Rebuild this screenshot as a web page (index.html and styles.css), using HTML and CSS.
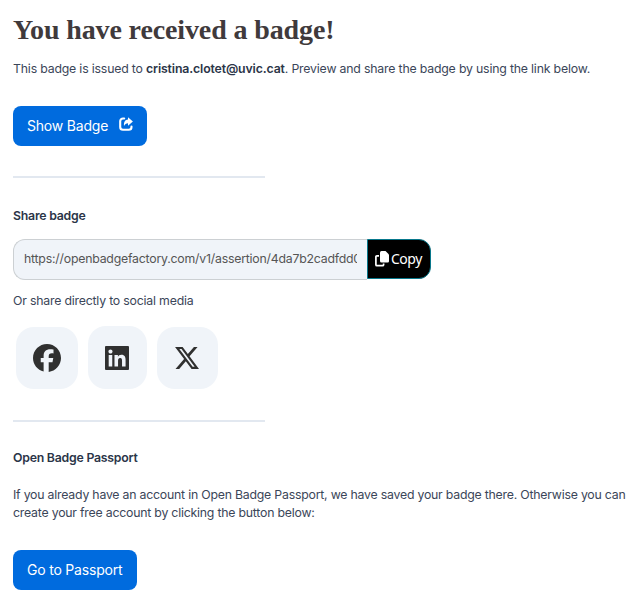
FILE: index.html
```html
<!DOCTYPE html>
<html lang="en">
<head>
<meta charset="utf-8">
<title>You have received a badge!</title>
<link rel="stylesheet" href="styles.css">
</head>
<body>
<main class="page">
  <h1 class="title"><span>You have received a badge!</span></h1>
  <p class="intro">This badge is issued to <strong>cristina.clotet@uvic.cat</strong>. Preview and share the badge by using the link below.</p>
  <a class="button button-show">Show Badge
    <svg class="share-icon" viewBox="0 0 14 14"><path d="M5.200 1.500H4A2.800 2.800 0 0 0 1.200 4.300V10A2.800 2.800 0 0 0 4 12.800H9.700A2.800 2.800 0 0 0 12.500 10V9.500" fill="none" stroke="currentColor" stroke-width="2.100" stroke-linecap="round"/><path d="M9 .3 13.900 4.500 9 8.700V6.200C7 6.200 6 7 5 9 4.600 5 6.200 2.700 9 2.600Z" fill="currentColor"/></svg>
  </a>
  <hr class="rule">
  <h2 class="subtitle">Share badge</h2>
  <div class="link-row">
    <div class="link-field"><span class="link-text">https://openbadgefactory.com/v1/assertion/4da7b2cadfdd0</span></div>
    <button class="copy" type="button"><svg class="copy-icon" viewBox="0 0 14 16"><path d="M6.500 0H10.500L14 3.500V10.200Q14 11.500 12.700 11.500H6.500Q5 11.500 5 10V1.500Q5 0 6.500 0Z" fill="currentColor"/><path d="M4 4.800H1.900Q.9 4.800.9 5.800V13.700Q.9 14.700 1.900 14.700H7.600Q8.600 14.700 8.600 13.700V12.500" fill="none" stroke="currentColor" stroke-width="1.700"/></svg>Copy</button>
  </div>
  <p class="social-label">Or share directly to social media</p>
  <div class="social">
    <a class="tile tile-facebook"><svg class="facebook-icon" viewBox="0 0 512 512"><path fill="currentColor" d="M512 256C512 114.600 397.400 0 256 0S0 114.600 0 256c0 120 82.700 220.800 194.200 248.500V334.200h-52.800V256h52.800v-33.700c0-87.100 39.400-127.500 125-127.500 16.200 0 44.200 3.200 55.700 6.400V172c-6-.6-16.500-1-29.600-1-42 0-58.200 15.900-58.200 57.200V256h83.600l-14.400 78.200h-69.300v175.900C413.800 494.800 512 386.900 512 256Z"/></svg></a>
    <a class="tile tile-linkedin"><svg class="linkedin-icon" viewBox="0 32 448 448"><path fill="currentColor" d="M430 32H18Q0 32 0 50V462Q0 480 18 480H430Q448 480 448 462V50Q448 32 430 32ZM135.400 416H69V202.200h66.500V416Zm-33.200-243c-21.300 0-38.500-17.300-38.500-38.500S80.900 96 102.200 96c21.200 0 38.500 17.300 38.500 38.500 0 21.300-17.200 38.500-38.500 38.500Zm282.100 243h-66.400V312c0-24.800-.5-56.700-34.500-56.700-34.600 0-39.900 27-39.900 54.900V416h-66.400V202.200h63.700v29.200h.9c8.900-16.800 30.600-34.500 62.900-34.500 67.200 0 79.700 44.300 79.700 101.900V416Z"/></svg></a>
    <a class="tile tile-x"><svg class="x-icon" viewBox="26 48 461 416" preserveAspectRatio="none"><path fill="currentColor" d="M389.200 48h70.600L305.600 224.200 487 464H345L233.700 318.600 106.500 464H35.800l164.900-188.500L26.800 48h145.600l100.500 132.900L389.200 48Zm-24.800 373.800h39.100L151.100 88h-42l255.300 333.800Z"/></svg></a>
  </div>
  <hr class="rule">
  <h2 class="subtitle subtitle-passport">Open Badge Passport</h2>
  <p class="passport-text">If you already have an account in Open Badge Passport, we have saved your badge there. Otherwise you can<br>create your free account by clicking the button below:</p>
  <a class="button button-passport">Go to Passport</a>
</main>
</body>
</html>
```
FILE: styles.css
```css
* { box-sizing: border-box; }
body {
  margin: 0;
  background: #fff;
  color: #3b4659;
  font: 12.3px/18px Inter, "Liberation Sans", sans-serif;
  letter-spacing: -0.2px;
}
.page { padding: 10px 13px 0; white-space: nowrap; }
.title {
  margin: 0;
  color: #403a3c;
  font: bold 28px/40px "Liberation Serif", serif;
  letter-spacing: -0.12px;
}
.intro { margin: 10px 0 27.5px; letter-spacing: -0.185px; }
strong { color: #2b3548; font-weight: 600; letter-spacing: -0.13px; }
.button {
  display: flex;
  align-items: center;
  height: 40px;
  padding: 0 14px;
  border-radius: 8px;
  background: #006bde;
  color: #fff;
  font-size: 14px;
}
.button-show { width: 134px; justify-content: space-between; }
.button-passport { width: 124px; }
.share-icon { width: 14px; height: 14px; margin-top: -3px; }
.rule {
  width: 252px;
  height: 2px;
  margin: 30.5px 0 28.500px;
  border: 0;
  background: #e2e8f0;
}
.subtitle { margin: 0; color: #2b3548; font-size: 12.3px; line-height: 18px; font-weight: 600; letter-spacing: -0.23px; }
.link-row { display: flex; width: 418px; height: 41px; margin-top: 14px; }
.link-field {
  display: flex;
  align-items: center;
  width: 354px;
  padding: 0 10px;
  border: 1px solid #ccd0d3;
  border-right: 0;
  border-radius: 12px 0 0 12px;
  background: #f0f4f9;
  color: #555;
}
.link-text { width: 333px; overflow: hidden; letter-spacing: -0.215px; }
.copy {
  display: flex;
  align-items: center;
  gap: 2px;
  width: 64px;
  height: 40px;
  padding: 0 0 0 7px;
  border: 1px solid #08788c;
  border-radius: 0 12px 12px 0;
  background: #000;
  color: #fff;
  font: 14px/20px "Noto Sans", sans-serif;
  letter-spacing: -0.5px;
}
.copy-icon { flex: none; width: 14px; height: 16px; }
.social-label { margin: 12px 0 16.500px; }
.social { display: flex; align-items: center; gap: 10px; height: 63px; margin-left: 3px; color: #303030; }
.tile { display: flex; align-items: center; justify-content: center; height: 62px; border-radius: 18px; background: #f0f4f9; }
.tile-facebook { width: 62px; }
.tile-linkedin { width: 59px; height: 63px; }
.tile-x { width: 61px; }
.facebook-icon { width: 28px; height: 28px; }
.linkedin-icon { width: 24px; height: 24px; margin-right: 1px; }
.x-icon { width: 24px; height: 22px; margin-right: 1px; }
.social + .rule { margin: 31px 0 27px; }
.subtitle-passport { margin-bottom: 19px; }
.passport-text { margin: 0 0 28px; letter-spacing: -0.215px; }
```
